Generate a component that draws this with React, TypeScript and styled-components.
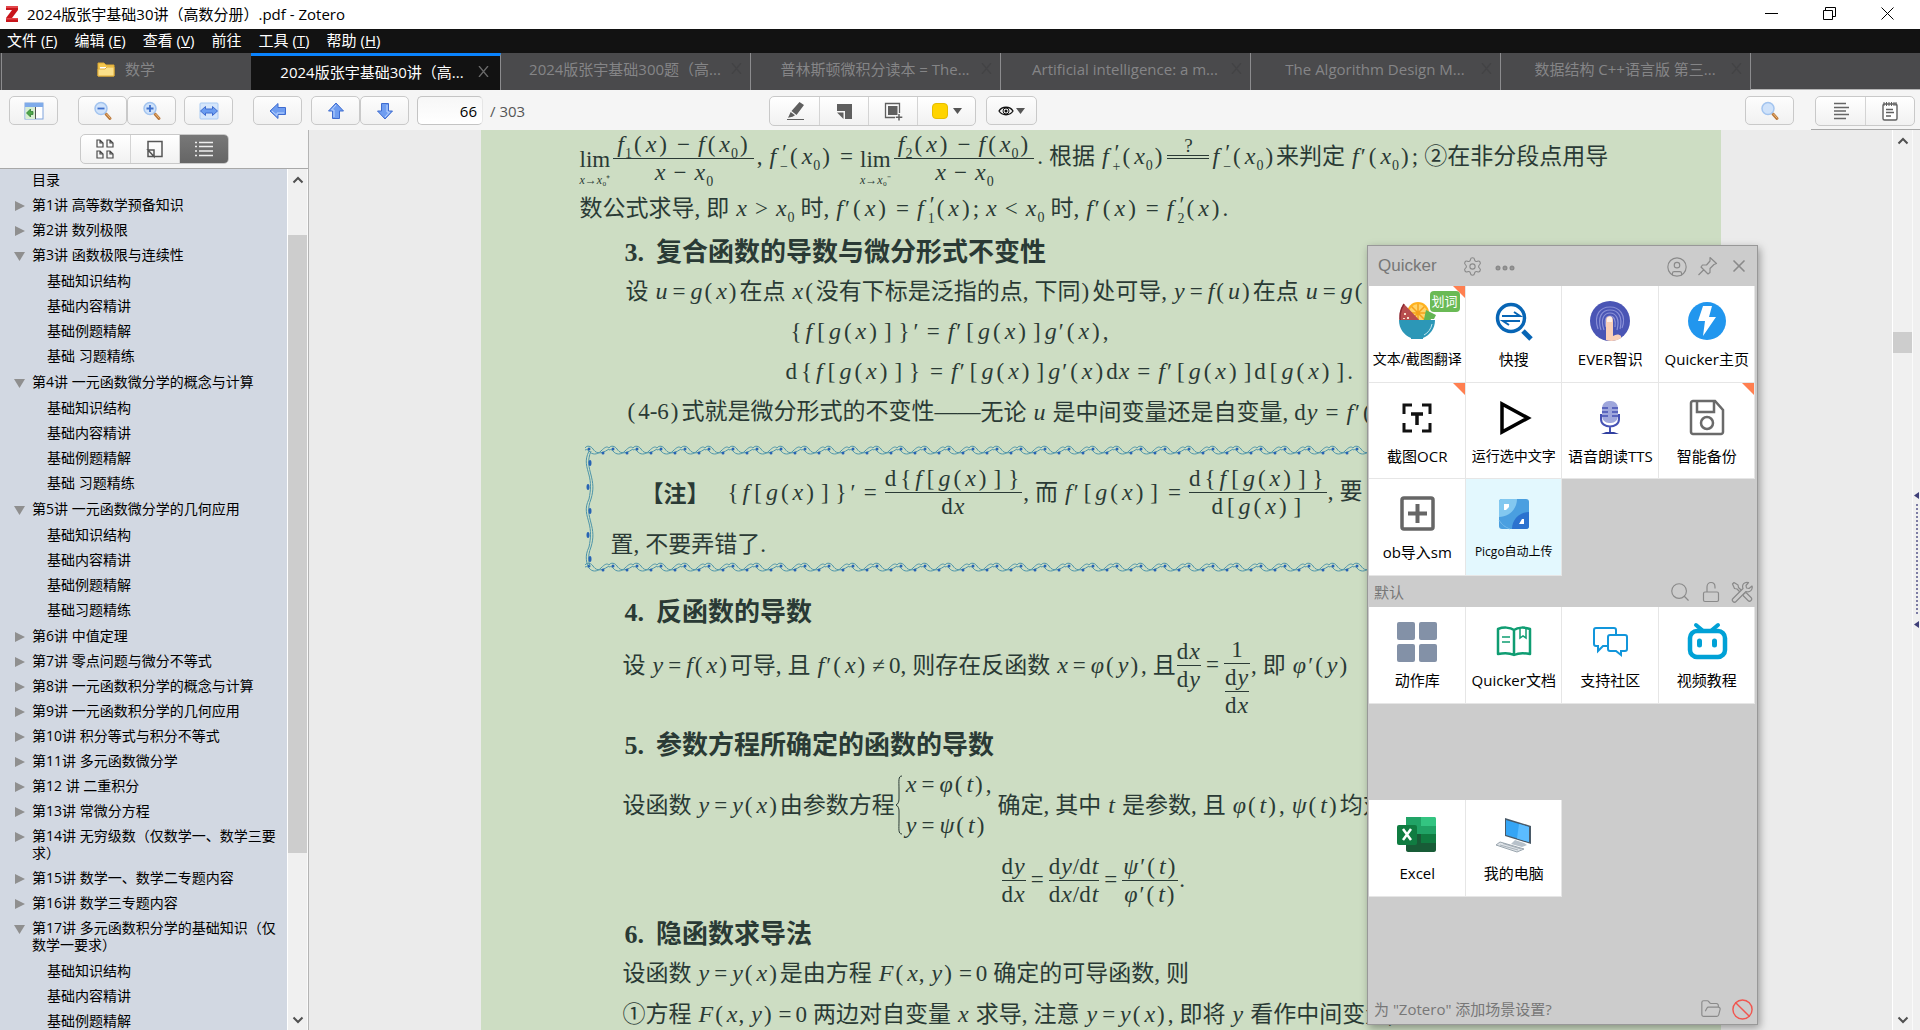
import React from "react";
import styled, { createGlobalStyle, css } from "styled-components";
import { Settings, CircleUser, X, Search, FolderOpen, Ban, Ellipsis } from "lucide-react";

const UI_FONT = '"Open Sans", "Noto Sans CJK SC", sans-serif';
const BOOK_FONT = '"Liberation Serif", "Noto Sans CJK SC", serif';

const GlobalStyle = createGlobalStyle`
  * { box-sizing: border-box; }
  body { margin: 0; background: #ebebeb; font-family: ${UI_FONT}; }
  button { font: inherit; color: inherit; padding: 0; border: 0; background: none; }
  ul { list-style: none; margin: 0; padding: 0; }
`;

const Window = styled.div`
  height: 100vh;
  display: flex;
  flex-direction: column;
  overflow: hidden;
`;

/* ---------- Title bar ---------- */

const TitleBar = styled.header`
  height: 29px;
  flex: none;
  display: flex;
  align-items: center;
  gap: 8px;
  padding: 0 4px 2px 5px;
  background: #fff;
  color: #000;
  font-size: 15px;
  white-space: nowrap;
`;

const TitleText = styled.span`
  flex: 1;
`;

const WindowButton = styled.button`
  width: 58px;
  height: 27px;
  display: grid;
  place-items: center;
`;

/* ---------- Menu bar ---------- */

const MenuBar = styled.nav`
  height: 24px;
  flex: none;
  display: flex;
  align-items: flex-start;
  gap: 17px;
  padding-left: 7px;
  background: #121212;
  color: #fff;
  font-size: 15px;
`;

const MenuButton = styled.button`
  line-height: 22px;
  white-space: nowrap;
`;

/* ---------- Tabs ---------- */

const TabBar = styled.div`
  height: 37px;
  flex: none;
  display: flex;
  padding-left: 1px;
  background: #4a4a4c;
`;

const TabClose = styled.button<{ $active?: boolean }>`
  width: 20px;
  height: 20px;
  margin-left: 4px;
  display: grid;
  place-items: center;
  color: ${(p) => (p.$active ? "#6a6a6a" : "#434345")};
`;

const Tab = styled.div<{ $active?: boolean; $first?: boolean }>`
  width: 250px;
  display: flex;
  align-items: center;
  padding: 0 4px 6px 27px;
  border-right: 1px solid #8c8c8e;
  color: #858587;
  font-size: 15px;
  ${(p) =>
    p.$first &&
    css`
      padding: 0 20px 6px;
      border-left: 1px solid #8c8c8e;
      border-right-color: #4a4a4c;
    `}
  ${(p) =>
    p.$active &&
    css`
      background: #121212;
      color: #fff;
      border-top: 3px solid #0a84ff;
      padding: 0 7px 3px 24px;
    `}
`;

const TabTitle = styled.button`
  flex: 1;
  min-width: 0;
  display: flex;
  align-items: center;
  justify-content: center;
  gap: 10px;
  white-space: nowrap;
  overflow: hidden;
`;

const TabRest = styled.div`
  flex: 1;
  border-bottom: 1px solid #b5b5b5;
`;

/* ---------- Toolbar ---------- */

const Toolbar = styled.div`
  height: 40px;
  flex: none;
  display: flex;
  align-items: center;
  padding: 1px 5px 0 9px;
  background: #f5f5f5;
  position: relative;
`;

const Cluster = styled.div<{ $gap?: number; $left?: number }>`
  display: flex;
  align-items: center;
  gap: ${(p) => p.$gap || 0}px;
  margin-left: ${(p) => p.$left || 0}px;
`;

const Spacer = styled.div`
  flex: 1;
`;

const ToolButton = styled.button<{ $w?: number }>`
  width: ${(p) => p.$w || 49}px;
  height: 29px;
  display: flex;
  align-items: center;
  justify-content: center;
  gap: 2px;
  border: 1px solid #c9c9c9;
  border-radius: 5px;
  background: linear-gradient(#fdfdfd, #f1f1f1);
`;

const Segments = styled.div`
  display: flex;
  height: 30px;
  border: 1px solid #c9c9c9;
  border-radius: 5px;
  overflow: hidden;
  background: linear-gradient(#fff, #f1f1f1);
`;

const Segment = styled.button<{ $w?: number; $on?: boolean }>`
  width: ${(p) => p.$w || 49}px;
  display: flex;
  align-items: center;
  justify-content: center;
  gap: 5px;
  background: ${(p) => (p.$on ? "linear-gradient(#787878, #656565)" : "none")};
  & + & {
    border-left: 1px solid #d4d4d4;
  }
`;

const PageInput = styled.input`
  width: 66px;
  height: 29px;
  border: 1px solid #c4c4c4;
  border-right-color: #e6e6e6;
  border-radius: 5px;
  padding: 0 5px;
  text-align: right;
  font: 15px ${UI_FONT};
  color: #000;
  background: linear-gradient(#f7f7f7, #fff);
`;

const PageTotal = styled.span`
  width: 279px;
  font-size: 15px;
  color: #555;
`;

const NotesUnderline = styled.div`
  position: absolute;
  right: 0;
  bottom: 0;
  width: 109px;
  height: 1px;
  background: #a8a8a8;
`;

const Swatch = styled.span`
  width: 16px;
  height: 16px;
  border-radius: 4px;
  border: 1px solid #e6bd00;
  background: #ffd400;
`;

/* ---------- Body ---------- */

const Body = styled.div`
  flex: 1;
  min-height: 0;
  display: flex;
  background: #ebebeb;
`;

const Sidebar = styled.aside`
  width: 309px;
  flex: none;
  display: flex;
  flex-direction: column;
  border-right: 1px solid #b4b4b4;
`;

const SidebarHeader = styled.div`
  height: 39px;
  flex: none;
  display: flex;
  justify-content: center;
  padding-top: 4px;
  border-bottom: 1px solid #a8a8a8;
  background: #f5f5f5;
`;

const SidebarBody = styled.div`
  flex: 1;
  min-height: 0;
  display: flex;
`;

const Outline = styled.ul`
  flex: 1;
  min-width: 0;
  overflow: hidden;
  background: #d2d8e2;
  color: #000;
  font-size: 14px;
`;

const SubOutline = styled.ul`
  padding: 1px 0;
`;

const OutlineRow = styled.div<{ $level: number }>`
  display: flex;
  padding: 2px 2px 6px ${(p) => (p.$level ? 29 : 14)}px;
  line-height: 17px;
`;

const Twisty = styled.button`
  width: 18px;
  height: 17px;
  flex: none;
  display: flex;
  align-items: flex-end;
  padding-bottom: 1px;
`;

const RowText = styled.span`
  flex: 1;
`;

const Scroll = styled.div`
  width: 21px;
  flex: none;
  display: flex;
  flex-direction: column;
  background: #f0f0f0;
  border-left: 1px solid #fff;
  border-right: 1px solid #fafafa;
`;

const ScrollButton = styled.button`
  height: 21px;
  flex: none;
  display: grid;
  place-items: center;
`;

const Track = styled.div`
  flex: 1;
  display: flex;
  flex-direction: column;
`;

const Before = styled.div<{ $grow: number }>`
  flex: ${(p) => p.$grow} 0 0;
`;

const Thumb = styled.div<{ $grow: number }>`
  flex: ${(p) => p.$grow} 0 0;
  background: #cdcdcd;
`;

const Viewer = styled.main`
  flex: 1;
  min-width: 0;
  display: flex;
  justify-content: center;
  overflow: hidden;
`;

const Splitter = styled.div`
  width: 7px;
  flex: none;
  display: flex;
  flex-direction: column;
  align-items: center;
  justify-content: center;
  gap: 5px;
  padding-bottom: 40px;
  background: #f0f0f0;
`;

const Dots = styled.div`
  width: 2px;
  height: 112px;
  background: repeating-linear-gradient(#7c7ca4 0 2px, #f0f0f0 2px 4px);
`;

/* ---------- Book page ---------- */

const Page = styled.article`
  width: 1240px;
  flex: none;
  padding-left: 99px;
  overflow: hidden;
  background: #cdddc3;
  color: #2a3a35;
  font-family: ${BOOK_FONT};
  font-size: 23px;
  white-space: nowrap;
`;

const Line = styled.div<{ $h?: number; $indent?: number; $dense?: boolean }>`
  --op-gap: ${(p) => (p.$dense ? 4 : 7)}px;
  --fence-gap: ${(p) => (p.$dense ? 1 : 2)}px;
  height: ${(p) => p.$h || 40}px;
  padding-left: ${(p) => p.$indent || 0}px;
  display: flex;
  align-items: center;
`;

const Heading = styled.h2<{ $gap?: number }>`
  height: 37px;
  margin: ${(p) => p.$gap || 0}px 0 0;
  padding-left: 45px;
  display: flex;
  align-items: center;
  gap: 12px;
  font-size: 26px;
  font-weight: 700;
  line-height: 37px;
`;

const Run = styled.span`
  line-height: 26px;
`;

const Var = styled.i`
  font-size: 24px;
  margin: 0 1px;
`;

const Fence = styled.span<{ $wide?: boolean }>`
  margin: 0 3px 0 ${(p) => (p.$wide ? "4px" : "var(--fence-gap)")};
`;

const Op = styled.span`
  margin: 0 var(--op-gap);
`;

const Mark = styled.span`
  margin-right: 6px;
`;

const Prime = styled.span`
  margin: 0 1px;
`;

const Han = styled.span<{ $l?: boolean; $r?: boolean }>`
  margin-left: ${(p) => (p.$l ? 6 : 0)}px;
  margin-right: ${(p) => (p.$r ? 6 : 0)}px;
`;

const Sub = styled.sub`
  font-size: 14px;
  line-height: 0;
`;

const Scripts = styled.span`
  display: inline-flex;
  flex-direction: column;
  vertical-align: middle;
  margin-left: 3px;
  font-size: 14px;
  line-height: 12px;
`;

const ScriptPrime = styled.span`
  padding-left: 2px;
  font-size: 23px;
  line-height: 16px;
`;

const FracBox = styled.span<{ $deep?: boolean; $wide?: boolean }>`
  display: inline-flex;
  flex-direction: column;
  align-items: center;
  margin: 0 ${(p) => (p.$wide ? 3 : 1)}px;
  padding-top: ${(p) => (p.$deep ? 26 : 0)}px;
`;

const FracTop = styled.span<{ $wide?: boolean }>`
  border-bottom: 1px solid #2a3a35;
  align-self: stretch;
  padding: 0 ${(p) => (p.$wide ? 3 : 0)}px;
  text-align: center;
`;

const LimBox = styled.span`
  display: inline-flex;
  flex-direction: column;
  align-items: center;
  padding-top: 18px;
`;

const LimUnder = styled.span`
  font-size: 12px;
  line-height: 14px;
`;

const Cases = styled.span`
  display: flex;
  align-items: center;
  gap: 2px;
`;

const CaseRows = styled.span`
  display: flex;
  flex-direction: column;
  gap: 14px;
`;

const Quest = styled.span`
  display: inline-flex;
  flex-direction: column;
  align-items: center;
  width: 42px;
  height: 42px;
  margin: 0 2px;
  font-size: 19px;
  line-height: 18px;
`;

const LongEquals = styled.span`
  width: 42px;
  height: 4px;
  border: solid #2a3a35;
  border-width: 1px 0;
`;

const NoteBox = styled.section`
  position: relative;
  width: 1066px;
  height: 128px;
  margin: 13px 0 0 5px;
  padding: 17px 0 0 26px;
`;

const NoteFrame = styled.svg`
  position: absolute;
  inset: 0;
  width: 100%;
  height: 100%;
`;

const OPS = "=-><≠";
const isHan = (c: string) => /[\u3000-\u9fff①②]/.test(c);

/* Small notation: letters are italic variables, D is the upright differential,
   ' is a prime and _ puts the next character below the line. */
function tex(src: string): React.ReactNode[] {
  const out: React.ReactNode[] = [];
  let i = 0;
  while (i < src.length) {
    const c = src[i];
    const k = i;
    if (isHan(c)) {
      let j = i;
      while (j < src.length && isHan(src[j])) j++;
      const prev = src[i - 1] || "";
      const next = src[j] || "";
      out.push(
        <Han key={k} $l={/[a-z0-9]/i.test(prev)} $r={/[a-zφψ]/i.test(next)}>
          {src.slice(i, j)}
        </Han>
      );
      i = j;
      continue;
    }
    if (c === "'" && src[i + 1] === "_") {
      out.push(
        <Scripts key={k}>
          <ScriptPrime>′</ScriptPrime>
          <span>{src[i + 2]}</span>
        </Scripts>
      );
      i += 3;
      continue;
    }
    if (c === "_") {
      out.push(<Sub key={k}>{src[i + 1]}</Sub>);
      i += 2;
      continue;
    }
    if (c === "'") out.push(<Prime key={k}>′</Prime>);
    else if (c === "D") out.push("d");
    else if (OPS.includes(c)) out.push(<Op key={k}>{c === "-" ? "−" : c}</Op>);
    else if ("()".includes(c)) out.push(<Fence key={k}>{c}</Fence>);
    else if ("[]{}".includes(c)) out.push(<Fence key={k} $wide>{c}</Fence>);
    else if (",;.".includes(c)) out.push(<Mark key={k}>{c}</Mark>);
    else if (/[a-zA-Zφψ]/.test(c)) out.push(<Var key={k}>{c}</Var>);
    else out.push(c);
    i++;
  }
  return out;
}

const T = ({ s }: { s: string }) => <Run>{tex(s)}</Run>;

const Frac = ({ a, b, deep, wide }: { a: string; b: React.ReactNode; deep?: boolean; wide?: boolean }) => (
  <FracBox $deep={deep} $wide={wide}>
    <FracTop $wide={wide}>
      <T s={a} />
    </FracTop>
    {typeof b === "string" ? <T s={b} /> : b}
  </FracBox>
);

const Lim = ({ side }: { side: string }) => (
  <LimBox>
    <Run>lim</Run>
    <LimUnder>
      <i>x</i>→<i>x</i>₀{side}
    </LimUnder>
  </LimBox>
);

const Ornament = () => (
  <NoteFrame aria-hidden="true">
    <defs>
      <pattern id="vine" width="24" height="11" patternUnits="userSpaceOnUse">
        <g fill="none" stroke="#4b93a8" strokeWidth="1">
          <path d="M0 3C2 0 6 1 8 4S14 11 24 4" />
          <path d="M4 6C7 10 12 10 16 6S22 1 24 3" />
          <path d="M0 4C-2 6 -3 7 -4 7M0 5C2 4 3 5 4 6" />
        </g>
        <circle cx="4" cy="4" r="1.500" fill="#2763b4" />
        <circle cx="18" cy="8" r="1.500" fill="#2763b4" />
      </pattern>
      <pattern id="vineSide" width="11" height="48" patternUnits="userSpaceOnUse">
        <g fill="none" stroke="#4b93a8" strokeWidth="1">
          <path d="M4 0C-1 10 2 16 4 24S6 38 4 48" />
          <path d="M6 0C2 10 4 16 6 24S9 38 6 48" />
        </g>
        <ellipse cx="5" cy="12" rx="1.500" ry="3" fill="#2763b4" />
        <ellipse cx="3" cy="36" rx="1.500" ry="3" fill="#2763b4" />
      </pattern>
    </defs>
    <rect width="100%" height="11" fill="url(#vine)" />
    <svg y="117" width="100%" height="11">
      <rect width="100%" height="11" fill="url(#vine)" />
    </svg>
    <svg y="6" width="11" height="115">
      <rect width="11" height="115" fill="url(#vineSide)" />
    </svg>
  </NoteFrame>
);

/* ---------- Quicker panel ---------- */

const Panel = styled.section`
  position: absolute;
  top: 245px;
  right: 162px;
  width: 391px;
  padding: 0 2px 0 1px;
  border: 1px solid #989898;
  background: #cccccc;
  box-shadow: 2px 3px 8px rgba(0, 0, 0, 0.35);
`;

const PanelBar = styled.div<{ $h?: number }>`
  height: ${(p) => p.$h || 31}px;
  display: flex;
  align-items: center;
  gap: 10px;
  padding: 0 ${(p) => (p.$h ? 6 : 3)}px 0 5px;
  color: #777;
  font-size: 15px;
`;

const PanelTitle = styled.span`
  width: 78px;
  padding-left: 4px;
  font: 17px "Liberation Sans", sans-serif;
`;

const IconButton = styled.button<{ $color?: string }>`
  width: 21px;
  height: 21px;
  display: grid;
  place-items: center;
  color: ${(p) => p.$color || "#8a8a8a"};
`;

const Tiles = styled.div<{ $h: number; $rows: number }>`
  height: ${(p) => p.$h}px;
  display: grid;
  grid-template-columns: repeat(4, 1fr);
  grid-template-rows: repeat(${(p) => p.$rows}, 1fr);
`;

const Tile = styled.button<{ $hot?: boolean; $row?: number; $size?: number }>`
  position: relative;
  display: flex;
  flex-direction: column;
  align-items: center;
  padding: 14px 0 0 1px;
  gap: 7px;
  ${(p) => p.$row && `grid-row: ${p.$row};`}
  border-right: 1px solid #e6e6e6;
  border-bottom: 1px solid #e6e6e6;
  background: ${(p) => (p.$hot ? "#e3f8fe" : "#fff")};
  color: #000;
  font-size: ${(p) => p.$size || 15}px;
  line-height: 20px;
  white-space: nowrap;
`;

const Corner = styled.span`
  position: absolute;
  top: 0;
  right: 0;
  border: 6px solid #ff7f50;
  border-left-color: transparent;
  border-bottom-color: transparent;
`;

const Badge = styled.span`
  position: absolute;
  top: 5px;
  right: 5px;
  width: 30px;
  height: 21px;
  border-radius: 4px;
  background: #6aba55;
  color: #fff;
  font-size: 13px;
  line-height: 20px;
`;

/* ---------- Icons ---------- */

const Svg = ({ s = 20, w, h, children }: { s?: number; w?: number; h?: number; children: React.ReactNode }) => (
  <svg width={w || s} height={h || s} viewBox={`0 0 ${w || s} ${h || s}`} fill="none" aria-hidden="true">
    {children}
  </svg>
);

const Chevron = ({ up }: { up?: boolean }) => (
  <Svg w={12} h={8}>
    <path d={up ? "M1.500 6.500L6 2l4.500 4.500" : "M1.500 1.500L6 6l4.500-4.500"} stroke="#505050" strokeWidth="2" />
  </Svg>
);

const Caret = () => (
  <Svg w={9} h={6}>
    <path d="M0 0h9L4.500 6z" fill="#555" />
  </Svg>
);

const Magnifier = ({ sign }: { sign?: string }) => (
  <Svg>
    <path d="M13 13l4 4.500" stroke="#b9773a" strokeWidth="3" strokeLinecap="round" />
    <path d="M13.500 13l3.500 4" stroke="#f0bd7c" strokeWidth="1" strokeLinecap="round" />
    <circle cx="8" cy="7.500" r="6" fill="#cfe2fa" stroke="#a3c4ef" strokeWidth="1.500" />
    {sign && <path d={sign === "+" ? "M4.500 7.500h7M8 4v7" : "M4.500 7.500h7"} stroke="#3f70cc" strokeWidth="1.800" />}
  </Svg>
);

const BlueArrow = ({ turn }: { turn: number }) => (
  <Svg>
    <path
      transform={`rotate(${turn} 10 10)`}
      d="M10 2l7.500 8H13.500v7.500h-7V10h-4z"
      fill="#6f9df0"
      stroke="#3f6cd0"
      strokeLinejoin="round"
    />
    <path transform={`rotate(${turn} 10 10)`} d="M10 4L5.500 9H8v7" stroke="#bcd5ff" />
  </Svg>
);

const FitIcon = () => (
  <Svg>
    <rect x="1" y="2" width="18" height="16" rx="1" fill="#d5e6fb" stroke="#a9caf3" />
    <path d="M1.500 10l5-4.500V8h7V5.500l5 4.500-5 4.500V12h-7v2.500z" fill="#6b9df0" stroke="#3f6cd0" />
  </Svg>
);

const SidebarIcon = () => (
  <Svg>
    <rect x="1" y="2" width="18" height="16" fill="#fff" stroke="#7fa3dc" />
    <path d="M1 2h18v4H1z" fill="#7fabea" />
    <path d="M1.500 6H11v12H1.500z" fill="#d9efd3" />
    <path d="M11.500 6v12" stroke="#555" />
    <path d="M2.500 12l4-4v2.500H9v3H6.500V16z" fill="#4fa84a" stroke="#277a2b" strokeWidth=".7" />
  </Svg>
);

const FolderIcon = () => (
  <Svg w={18} h={16}>
    <path d="M1 2h6l2 2h8v11H1z" fill="#f5c84f" stroke="#dba732" />
    <path d="M3 6h12v3H3z" fill="#fff" />
    <path d="M1 8h7l2-2h7v9H1z" fill="#fbe08a" stroke="#e0ae3a" />
  </Svg>
);

const ZoteroIcon = () => (
  <Svg w={14} h={18}>
    <path d="M1 1h12v4L7 13h6v4H1v-4l6-8H1z" fill="#c8151b" />
    <path d="M1 1h12v2H1zM1 13h12v1.500H1z" fill="#e3474b" />
  </Svg>
);

const PenIcon = () => (
  <Svg>
    <path d="M14.500 1l4.500 3-7.500 10-5-4zM5.700 11l4.300 3.200-2.500 1.500-4.500 1z" fill="#5f5f5f" />
    <path d="M2 18.500h17" stroke="#5f5f5f" strokeWidth="1.200" />
  </Svg>
);

const NoteIcon = () => (
  <Svg>
    <path d="M3 3h15v15h-7v-8H3z" fill="#5f5f5f" />
    <path d="M3 11.500h6.500V18z" fill="#5f5f5f" />
  </Svg>
);

const AreaIcon = () => (
  <Svg>
    <path d="M12 16.500H2.500v-14h14V12" stroke="#5f5f5f" strokeWidth="1.300" />
    <path d="M5 5h9.500v9H5z" fill="#5f5f5f" />
    <path d="M16 13v6.500M12.800 16.200h6.500" stroke="#5f5f5f" strokeWidth="1.500" />
  </Svg>
);

const EyeIcon = () => (
  <Svg w={16} h={12}>
    <path d="M1 6c3-5 11-5 14 0-3 5-11 5-14 0z" stroke="#111" strokeWidth="1.300" />
    <circle cx="8" cy="6" r="3" stroke="#111" />
    <circle cx="8" cy="6" r="1.500" fill="#111" />
  </Svg>
);

const AlignIcon = () => (
  <Svg>
    <path d="M3 2.500h12M3 6.500h15M3 10h12M3 13.500h15M3 17.500h12" stroke="#666" strokeWidth="1.600" />
  </Svg>
);

const NotepadIcon = () => (
  <Svg>
    <rect x="3" y="3" width="14" height="16" rx="1.500" fill="#fff" stroke="#5f5f5f" strokeWidth="1.400" />
    <path d="M4 1v4M6.500 1v4M9 1v4M11.500 1v4M14 1v4M16 1v4" stroke="#5f5f5f" />
    <path d="M6 8.500h7M6 11.500h8M6 15h5" stroke="#5f5f5f" strokeWidth="1.300" />
  </Svg>
);

const ThumbsIcon = () => (
  <Svg>
    {[
      [2, 1],
      [12, 1],
      [2, 12],
      [12, 12],
    ].map(([x, y]) => (
      <path key={`${x}${y}`} d={`M${x} ${y}h3l3 3v4h-6zM${x + 3} ${y}v3h3`} stroke="#4a4a4a" strokeWidth="1.200" />
    ))}
  </Svg>
);

const StickyIcon = () => (
  <Svg>
    <path d="M3 2.500h14v15H3zM3 11h6v6.500z" stroke="#555" strokeWidth="1.500" />
  </Svg>
);

const ListIcon = () => (
  <Svg>
    <path d="M5 3.500h14M5 7.500h14M5 12h14M5 16.500h14" stroke="#eee" strokeWidth="1.400" />
    <path d="M1 3.500h2M1 7.500h2M1 12h2M1 16.500h2" stroke="#eee" strokeWidth="1.400" />
  </Svg>
);

const PinIcon = () => (
  <Svg s={21}>
    <path
      d="M13 1.500l6.500 6-2.500 1-4 4v4l-2 1.500-7-7 1.500-2h4l3.500-4zM7 13.500L1.500 19"
      stroke="#8a8a8a"
      strokeWidth="1.200"
      strokeLinejoin="round"
    />
  </Svg>
);

const LockIcon = () => (
  <Svg s={22}>
    <rect x="3.500" y="11" width="15" height="9.500" rx="1.500" stroke="#8a8a8a" strokeWidth="1.200" />
    <path d="M7 11V6c0-6 8-6 8 0v1.500" stroke="#8a8a8a" strokeWidth="1.200" />
  </Svg>
);

const ToolsIcon = () => (
  <Svg s={22}>
    <g stroke="#8a8a8a" strokeWidth="1.200" strokeLinejoin="round">
      <path d="M1.500 3L3 1.500l4 2.500.5 2.500 4 4-1.500 1.500-4-4L3.500 7.500z" />
      <path d="M13 12.500l2-1 5 5c2 2-1 5-3 3l-5-5z" />
      <path d="M17.500 1.500c-4-1-7 2-5.500 6l-10 10c-2 2 1 5 3 3l10-10c4 1.500 7-2 6-5.500l-3 2.500-2.500-.5-.500-2.500z" fill="#ccc" />
    </g>
  </Svg>
);

const BowlIcon = () => (
  <Svg s={42}>
    <circle cx="22" cy="13" r="11" fill="#ffb21f" />
    <circle cx="22" cy="13" r="9" fill="#ffd46a" />
    <path d="M22 4v18M13 13h18M15.500 6.500l13 13M28.500 6.500l-13 13" stroke="#f6a21a" strokeWidth="1.500" />
    <path d="M8 4L27 24H5C2 16 4 9 8 4z" fill="#b84d4e" />
    <path d="M8 4c-4 6-5 13-3 20" stroke="#8c2b35" strokeWidth="1.500" />
    <path d="M9 13v2M12 17v2M8 18v1" stroke="#f4dcc8" strokeWidth="2" />
    <path d="M30 10l10 5-2 4h-3l-2 5h-6z" fill="#63b553" />
    <path d="M3 20h36c0 9-5 15-12 18v1H15v-1C8 35 3 29 3 20z" fill="#2c97b7" />
    <path d="M36 24c-1 5-4 9-8 11" stroke="#bfe6ee" />
  </Svg>
);

const QuickSearchIcon = () => (
  <Svg s={42}>
    <circle cx="18" cy="18" r="13.500" stroke="#0765b5" strokeWidth="3.500" />
    <path d="M30 31l8 8" stroke="#0765b5" strokeWidth="5" />
    <path d="M9 16h18l-6-4M27 21H10l6 4" stroke="#0765b5" strokeWidth="2" />
  </Svg>
);

const FingerprintIcon = () => (
  <Svg s={42}>
    <circle cx="21" cy="21" r="20" fill="#4a55b5" />
    <g stroke="#8a90d6" strokeWidth="1.200">
      <path d="M9 29C4 14 12 7 21 7s17 8 12 21M12 30C8 17 13 10 21 10s13 6 10 19M15 30c-4-11 0-17 6-17s10 6 7 17M17 27c-2-7 0-11 4-11s6 4 5 11" />
    </g>
    <path d="M17 40V20c0-5 7-5 7 0v16c3-2 6-2 8 0v2c-4 3-10 4-15 2z" fill="#fbd0b8" />
    <path d="M18 18c2-2 4-2 5 0v4h-5z" fill="#fff0e8" />
  </Svg>
);

const BoltIcon = () => (
  <Svg s={42}>
    <circle cx="21" cy="21" r="19" fill="#2196ee" />
    <path d="M17 6h9l-3 11h7L17 36l2-15h-7z" fill="#fff" />
  </Svg>
);

const OcrIcon = () => (
  <Svg s={42}>
    <path d="M8 17V8h8M26 8h8v9M34 26v8h-8M16 34H8v-8" stroke="#111" strokeWidth="3" />
    <path d="M15 17h12M21 17v11" stroke="#111" strokeWidth="3.500" />
  </Svg>
);

const PlayIcon = () => (
  <Svg s={42}>
    <path d="M9 7v28l26-14z" stroke="#000" strokeWidth="3.500" />
  </Svg>
);

const MicIcon = () => (
  <Svg s={42}>
    <rect x="13" y="4" width="16" height="22" rx="7" fill="#9fa7dc" />
    <path d="M13 11h6M23 11h6M13 15h6M23 15h6M13 19h6M23 19h6" stroke="#4652b4" strokeWidth="1.500" />
    <path d="M12 17v5c0 10 18 10 18 0v-5M21 29v7" stroke="#4652b4" strokeWidth="2" />
    <path d="M12 37l5-2h8l5 2z" fill="#303f9f" />
  </Svg>
);

const SaveIcon = () => (
  <Svg s={42}>
    <path d="M5 6c0-1 1-2 2-2h22l8 9v22c0 1-1 2-2 2H7c-1 0-2-1-2-2z" stroke="#6a6a6a" strokeWidth="2.500" />
    <path d="M11 4v11h17V4" stroke="#6a6a6a" strokeWidth="2.500" />
    <circle cx="21" cy="26" r="6" stroke="#6a6a6a" strokeWidth="2.500" />
  </Svg>
);

const PlusBoxIcon = () => (
  <Svg s={42}>
    <rect x="6" y="5" width="31" height="31" rx="2" stroke="#666" strokeWidth="3.500" />
    <path d="M12 20.500h19M21.500 11v19" stroke="#666" strokeWidth="4" />
  </Svg>
);

const PicgoIcon = () => (
  <Svg s={42}>
    <rect x="6" y="6" width="30" height="30" rx="3" fill="#4a9fe0" />
    <path d="M9 6h15c0 10-8 18-18 18V9c0-2 1-3 3-3z" fill="#82c8f0" />
    <path d="M36 19v14c0 2-1 3-3 3H19c0-10 8-17 17-17z" fill="#2b72cf" />
    <path d="M11 11h5v3l-3 3h-2zM31 31h-5l3-5h2z" fill="#fff" />
    <path d="M6 27c3 5 6 7 11 9" stroke="#76bbea" />
  </Svg>
);

const GridIcon = () => (
  <Svg s={42}>
    {[1, 23].map((x) => [1, 23].map((y) => <rect key={`${x}-${y}`} x={x} y={y} width="18" height="18" rx="2" fill="#8391a7" />))}
  </Svg>
);

const BookIcon = () => (
  <Svg s={42}>
    <path
      d="M21 9c-4-3-11-3-16-1v25c5-1 12-1 16 1 4-2 11-2 16-1V8c-5-2-12-2-16 1zM21 9v24"
      stroke="#0f9d72"
      strokeWidth="2.500"
      strokeLinejoin="round"
    />
    <path d="M9 16h8M9 21h8M27 8v9l3-2 3 2V8" stroke="#0f9d72" strokeWidth="1.500" />
  </Svg>
);

const ChatIcon = () => (
  <Svg s={42}>
    <path d="M19 25h-5l-5 5v-5H7c-1 0-2-1-2-2V9c0-1 1-2 2-2h18c1 0 2 1 2 2v4" stroke="#1296db" strokeWidth="2" />
    <path
      d="M21 14h15c1 0 2 1 2 2v12c0 1-1 2-2 2h-4v4l-5-4h-6c-1 0-2-1-2-2V16c0-1 1-2 2-2z"
      stroke="#1296db"
      strokeWidth="2"
    />
  </Svg>
);

const VideoIcon = () => (
  <Svg s={42}>
    <path d="M10 4l6 5M32 4l-6 5" stroke="#00a1d6" strokeWidth="4" strokeLinecap="round" />
    <rect x="4" y="10" width="35" height="26" rx="7" stroke="#00a1d6" strokeWidth="4.500" />
    <path d="M13.500 20v4M28.500 20v4" stroke="#00a1d6" strokeWidth="5" strokeLinecap="round" />
  </Svg>
);

const ExcelIcon = () => (
  <Svg s={42}>
    <path d="M10 3h15v17H10z" fill="#21a366" />
    <path d="M25 3h13c1 0 2 0 2 2v7H25z" fill="#33c481" />
    <path d="M25 12h15v8H25z" fill="#21a366" />
    <path d="M10 20h15v9H10z" fill="#185c37" />
    <path d="M25 20h15v9H25z" fill="#107c41" />
    <path d="M10 29h30v7c0 1-1 2-2 2H12c-1 0-2-1-2-2z" fill="#185c37" />
    <rect x="1" y="11" width="20" height="20" rx="2" fill="#107c41" />
    <path d="M7 15l8 11M15 15L7 26" stroke="#fff" strokeWidth="2.500" />
  </Svg>
);

const ComputerIcon = () => (
  <Svg s={42}>
    <path d="M12 4l26 8v18l-26-8z" fill="#4a5a68" />
    <path d="M13 6l23 7v15l-23-7z" fill="#35a5f5" />
    <path d="M26 10l10 3v15l-12-3.500z" fill="#5bbcff" />
    <path d="M22 26l9 3 3 2-5 2-11-3z" fill="#b7c1ca" />
    <path d="M7 28l24 7-7 3-21-7z" fill="#dfe4e8" stroke="#9aa5ae" />
    <path d="M7 31l18 5M10 29.500l18 5.500" stroke="#9aa5ae" strokeWidth=".8" />
  </Svg>
);

/* ---------- Data ---------- */

type Node = { t: string; leaf?: boolean; kids?: string[] };

const outline: Node[] = [
  { t: "目录", leaf: true },
  { t: "第1讲 高等数学预备知识" },
  { t: "第2讲 数列极限" },
  { t: "第3讲 函数极限与连续性", kids: ["基础知识结构", "基础内容精讲", "基础例题精解", "基础 习题精练"] },
  { t: "第4讲 一元函数微分学的概念与计算", kids: ["基础知识结构", "基础内容精讲", "基础例题精解", "基础 习题精练"] },
  { t: "第5讲 一元函数微分学的几何应用", kids: ["基础知识结构", "基础内容精讲", "基础例题精解", "基础习题精练"] },
  { t: "第6讲 中值定理" },
  { t: "第7讲 零点问题与微分不等式" },
  { t: "第8讲 一元函数积分学的概念与计算" },
  { t: "第9讲 一元函数积分学的几何应用" },
  { t: "第10讲 积分等式与积分不等式" },
  { t: "第11讲 多元函数微分学" },
  { t: "第12 讲 二重积分" },
  { t: "第13讲 常微分方程" },
  { t: "第14讲 无穷级数（仅数学一、数学三要求）" },
  { t: "第15讲 数学一、数学二专题内容" },
  { t: "第16讲 数学三专题内容" },
  { t: "第17讲 多元函数积分学的基础知识（仅数学一要求）", kids: ["基础知识结构", "基础内容精讲", "基础例题精解"] },
];

const menus: [string, string?][] = [["文件", "F"], ["编辑", "E"], ["查看", "V"], ["前往"], ["工具", "T"], ["帮助", "H"]];

const tabs = [
  "2024版张宇基础30讲（高...",
  "2024版张宇基础300题（高...",
  "普林斯顿微积分读本 = The...",
  "Artificial intelligence: a m...",
  "The Algorithm Design M...",
  "数据结构 C++语言版 第三...",
];

const topTiles = [
  { t: "文本/截图翻译", i: <BowlIcon />, size: 14, corner: true, badge: "划词" },
  { t: "快搜", i: <QuickSearchIcon /> },
  { t: "EVER智识", i: <FingerprintIcon /> },
  { t: "Quicker主页", i: <BoltIcon /> },
  { t: "截图OCR", i: <OcrIcon />, corner: true },
  { t: "运行选中文字", i: <PlayIcon />, size: 14 },
  { t: "语音朗读TTS", i: <MicIcon /> },
  { t: "智能备份", i: <SaveIcon />, corner: true },
  { t: "ob导入sm", i: <PlusBoxIcon /> },
  { t: "Picgo自动上传", i: <PicgoIcon />, size: 12, hot: true },
];

const defaultTiles = [
  { t: "动作库", i: <GridIcon />, row: 1 },
  { t: "Quicker文档", i: <BookIcon />, row: 1 },
  { t: "支持社区", i: <ChatIcon />, row: 1 },
  { t: "视频教程", i: <VideoIcon />, row: 1 },
  { t: "Excel", i: <ExcelIcon />, row: 3 },
  { t: "我的电脑", i: <ComputerIcon />, row: 3 },
];

const ScrollBar = ({ before, thumb, after }: { before: number; thumb: number; after: number }) => (
  <Scroll>
    <ScrollButton aria-label="向上滚动">
      <Chevron up />
    </ScrollButton>
    <Track>
      <Before $grow={before} />
      <Thumb $grow={thumb} />
      <Before $grow={after} />
    </Track>
    <ScrollButton aria-label="向下滚动">
      <Chevron />
    </ScrollButton>
  </Scroll>
);

const OutlineItem = ({ node }: { node: Node }) => (
  <li>
    <OutlineRow $level={0}>
      {node.leaf ? (
        <Twisty as="span" />
      ) : (
        <Twisty aria-label={node.kids ? "折叠" : "展开"}>
          <Svg w={12} h={12}>
            <path d={node.kids ? "M0 2h11L5.500 11z" : "M1 1v10l10-5z"} fill="#8f8f8f" />
          </Svg>
        </Twisty>
      )}
      <RowText>{node.t}</RowText>
    </OutlineRow>
    {node.kids && (
      <SubOutline>
        {node.kids.map((k) => (
          <li key={k}>
            <OutlineRow $level={1}>
              <Twisty as="span" />
              <RowText>{k}</RowText>
            </OutlineRow>
          </li>
        ))}
      </SubOutline>
    )}
  </li>
);

const BookPage = () => (
  <Page>
    <Line $h={56}>
      <Lim side="⁺" />
      <Frac wide a="f_1(x)-f(x_0)" b="x-x_0" />
      <T s=",f'_−(x_0)=" />
      <Lim side="⁻" />
      <Frac wide a="f_2(x)-f(x_0)" b="x-x_0" />
      <T s=".根据f'_+(x_0)" />
      <Quest>
        ?<LongEquals />
      </Quest>
      <T s="f'_−(x_0)来判定f'(x_0);②在非分段点用导" />
    </Line>
    <Line $h={48}>
      <T s="数公式求导,即x>x_0时,f'(x)=f'_1(x);x<x_0时,f'(x)=f'_2(x)." />
    </Line>
    <Heading>
      <span>3.</span>
      <span>复合函数的导数与微分形式不变性</span>
    </Heading>
    <Line $indent={46} $dense>
      <T s="设u=g(x)在点x(没有下标是泛指的点,下同)处可导,y=f(u)在点u=g(" />
    </Line>
    <Line $indent={207}>
      <T s="{f[g(x)]}'=f'[g(x)]g'(x)," />
    </Line>
    <Line $h={41} $indent={206}>
      <T s="D{f[g(x)]}=f'[g(x)]g'(x)Dx=f'[g(x)]D[g(x)]." />
    </Line>
    <Line $indent={46}>
      <T s="(4" />
      <Run>-</Run>
      <T s="6)式就是微分形式的不变性" />
      <Run>——</Run>
      <T s="无论u是中间变量还是自变量,Dy=f'(" />
    </Line>
    <NoteBox>
      <Ornament />
      <Line $h={60} $indent={30}>
        <b>【注】</b>
        <Line $indent={14}>
          <T s="{f[g(x)]}'=" />
          <Frac a="D{f[g(x)]}" b="Dx" />
          <T s=",而f'[g(x)]=" />
          <Frac a="D{f[g(x)]}" b="D[g(x)]" />
          <T s=",要" />
        </Line>
      </Line>
      <Line $h={46}>
        <T s="置,不要弄错了." />
      </Line>
    </NoteBox>
    <Heading $gap={21}>
      <span>4.</span>
      <span>反函数的导数</span>
    </Heading>
    <Line $h={68} $indent={43} $dense>
      <T s="设y=f(x)可导,且f'(x)≠0,则存在反函数x=φ(y),且" />
      <Frac a="Dx" b="Dy" />
      <Op>=</Op>
      <Frac deep a="1" b={<Frac a="Dy" b="Dx" />} />
      <T s=",即φ'(y)" />
    </Line>
    <Heading $gap={28}>
      <span>5.</span>
      <span>参数方程所确定的函数的导数</span>
    </Heading>
    <Line $h={82} $indent={43} $dense>
      <T s="设函数y=y(x)由参数方程" />
      <Cases>
        <Svg w={8} h={60}>
          <path d="M7 1C3 1 4 6 4 14v10c0 3-1 5-3 6 2 1 3 3 3 6v10c0 8-1 13 3 13" stroke="#2a3a35" />
        </Svg>
        <CaseRows>
          <T s="x=φ(t)," />
          <T s="y=ψ(t)" />
        </CaseRows>
      </Cases>
      <T s="确定,其中t是参数,且φ(t),ψ(t)均对" />
    </Line>
    <Line $h={68} $indent={421} $dense>
      <Frac a="Dy" b="Dx" />
      <Op>=</Op>
      <Frac a="Dy/Dt" b="Dx/Dt" />
      <Op>=</Op>
      <Frac a="ψ'(t)" b="φ'(t)" />
      <Run>.</Run>
    </Line>
    <Heading $gap={2}>
      <span>6.</span>
      <span>隐函数求导法</span>
    </Heading>
    <Line $h={41} $indent={43} $dense>
      <T s="设函数y=y(x)是由方程F(x,y)=0确定的可导函数,则" />
    </Line>
    <Line $indent={43} $dense>
      <T s="①方程F(x,y)=0两边对自变量x求导,注意y=y(x),即将y看作中间变量,得" />
    </Line>
  </Page>
);

const Quicker = () => (
  <Panel>
    <PanelBar $h={40}>
      <PanelTitle>Quicker</PanelTitle>
      <IconButton aria-label="设置">
        <Settings size={21} strokeWidth={1.25} />
      </IconButton>
      <IconButton aria-label="更多">
        <Ellipsis size={24} strokeWidth={3} />
      </IconButton>
      <Spacer />
      <IconButton aria-label="用户">
        <CircleUser size={22} strokeWidth={1.25} />
      </IconButton>
      <IconButton aria-label="固定">
        <PinIcon />
      </IconButton>
      <IconButton aria-label="关闭">
        <X size={20} strokeWidth={2} />
      </IconButton>
    </PanelBar>
    <Tiles $h={290} $rows={3}>
      {topTiles.map((x) => (
        <Tile key={x.t} $size={x.size} $hot={x.hot}>
          {x.i}
          {x.corner && <Corner />}
          {x.badge && <Badge>{x.badge}</Badge>}
          <span>{x.t}</span>
        </Tile>
      ))}
    </Tiles>
    <PanelBar>
      <span>默认</span>
      <Spacer />
      <IconButton aria-label="搜索">
        <Search size={22} strokeWidth={1.25} />
      </IconButton>
      <IconButton aria-label="锁定">
        <LockIcon />
      </IconButton>
      <IconButton aria-label="工具">
        <ToolsIcon />
      </IconButton>
    </PanelBar>
    <Tiles $h={386} $rows={4}>
      {defaultTiles.map((x) => (
        <Tile key={x.t} $row={x.row}>
          {x.i}
          <span>{x.t}</span>
        </Tile>
      ))}
    </Tiles>
    <PanelBar>
      <span>为 "Zotero" 添加场景设置?</span>
      <Spacer />
      <IconButton aria-label="打开文件夹">
        <FolderOpen size={22} strokeWidth={1.25} />
      </IconButton>
      <IconButton $color="#f0564f" aria-label="禁用">
        <Ban size={23} strokeWidth={1.5} />
      </IconButton>
    </PanelBar>
  </Panel>
);

export default function App() {
  return (
    <Window>
      <GlobalStyle />
      <TitleBar>
        <ZoteroIcon />
        <TitleText>2024版张宇基础30讲（高数分册）.pdf - Zotero</TitleText>
        <Cluster>
          <WindowButton aria-label="最小化">
            <Svg s={13}>
              <path d="M0 6.500h13" stroke="#000" />
            </Svg>
          </WindowButton>
          <WindowButton aria-label="还原">
            <Svg s={13}>
              <path d="M.5 3.500h9v9h-9zM2.500 3.500v-3h10v9h-3" stroke="#000" />
            </Svg>
          </WindowButton>
          <WindowButton aria-label="关闭窗口">
            <Svg s={13}>
              <path d="M.5 .5l12 12M12.500 .5l-12 12" stroke="#000" />
            </Svg>
          </WindowButton>
        </Cluster>
      </TitleBar>
      <MenuBar>
        {menus.map(([t, k]) => (
          <MenuButton key={t}>
            {t}
            {k && (
              <>
                {" "}
                (<u>{k}</u>)
              </>
            )}
          </MenuButton>
        ))}
      </MenuBar>
      <TabBar>
        <Tab $first>
          <TabTitle>
            <FolderIcon />
            数学
          </TabTitle>
        </Tab>
        {tabs.map((t, n) => (
          <Tab key={t} $active={n === 0}>
            <TabTitle>{t}</TabTitle>
            <TabClose $active={n === 0} aria-label="关闭标签">
              <Svg s={11}>
                <path d="M1 0l9 11M10 0L1 11" stroke="currentColor" strokeWidth="1.300" />
              </Svg>
            </TabClose>
          </Tab>
        ))}
        <TabRest />
      </TabBar>
      <Toolbar>
        <ToolButton aria-label="切换侧边栏">
          <SidebarIcon />
        </ToolButton>
        <Cluster $left={20}>
          <ToolButton aria-label="缩小">
            <Magnifier sign="-" />
          </ToolButton>
          <ToolButton aria-label="放大">
            <Magnifier sign="+" />
          </ToolButton>
        </Cluster>
        <Cluster $left={8}>
          <ToolButton aria-label="适合宽度">
            <FitIcon />
          </ToolButton>
        </Cluster>
        <Cluster $left={20}>
          <ToolButton aria-label="后退">
            <BlueArrow turn={-90} />
          </ToolButton>
        </Cluster>
        <Cluster $left={9}>
          <ToolButton aria-label="上一页">
            <BlueArrow turn={0} />
          </ToolButton>
          <ToolButton aria-label="下一页">
            <BlueArrow turn={180} />
          </ToolButton>
        </Cluster>
        <Cluster $left={8} $gap={7}>
          <PageInput aria-label="页码" defaultValue="66" />
          <PageTotal>/ 303</PageTotal>
        </Cluster>
        <Cluster $gap={10}>
          <Segments>
            <Segment aria-label="高亮">
              <PenIcon />
            </Segment>
            <Segment aria-label="笔记">
              <NoteIcon />
            </Segment>
            <Segment aria-label="选择区域">
              <AreaIcon />
            </Segment>
            <Segment $w={58} aria-label="颜色">
              <Swatch />
              <Caret />
            </Segment>
          </Segments>
          <ToolButton $w={51} aria-label="外观">
            <EyeIcon />
            <Caret />
          </ToolButton>
        </Cluster>
        <Spacer />
        <Cluster $gap={21}>
          <ToolButton aria-label="在文档中查找">
            <Magnifier />
          </ToolButton>
          <Segments>
            <Segment aria-label="条目信息">
              <AlignIcon />
            </Segment>
            <Segment aria-label="笔记列表">
              <NotepadIcon />
            </Segment>
          </Segments>
        </Cluster>
        <NotesUnderline />
      </Toolbar>
      <Body>
        <Sidebar>
          <SidebarHeader>
            <Segments>
              <Segment aria-label="缩略图">
                <ThumbsIcon />
              </Segment>
              <Segment aria-label="注释">
                <StickyIcon />
              </Segment>
              <Segment $on aria-label="大纲">
                <ListIcon />
              </Segment>
            </Segments>
          </SidebarHeader>
          <SidebarBody>
            <Outline>
              {outline.map((n) => (
                <OutlineItem key={n.t} node={n} />
              ))}
            </Outline>
            <ScrollBar before={45} thumb={618} after={156} />
          </SidebarBody>
        </Sidebar>
        <Viewer>
          <BookPage />
        </Viewer>
        <ScrollBar before={181} thumb={21} after={656} />
        <Splitter>
          <Svg w={5} h={7}>
            <path d="M5 0v7L0 3.500z" fill="#3f3f78" />
          </Svg>
          <Dots />
          <Svg w={5} h={7}>
            <path d="M5 0v7L0 3.500z" fill="#3f3f78" />
          </Svg>
        </Splitter>
      </Body>
      <Quicker />
    </Window>
  );
}
